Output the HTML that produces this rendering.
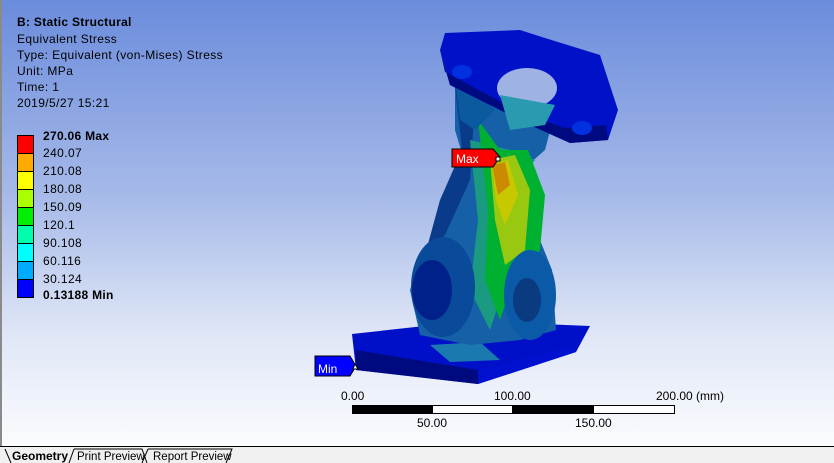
<!DOCTYPE html>
<html><head><meta charset="utf-8"><style>
html,body{margin:0;padding:0}
body{width:834px;height:462px;position:relative;overflow:hidden;font-family:"Liberation Sans","Noto Sans CJK SC",sans-serif;}
.bg{position:absolute;left:0;top:0;width:834px;height:446px;background:linear-gradient(#6b8cdc 0%,#a8bbe9 45%,#dfe6f6 75%,#fbfcfe 100%);}
.lb{position:absolute;left:0;top:0;width:2px;height:446px;background:#8a8a8a}
.t{position:absolute;font-size:12px;color:#000;white-space:nowrap;letter-spacing:0.4px}
.bar{position:absolute;left:17px;top:135px;width:15px;border:1px solid #000}
.bar div{height:17px;border-bottom:1px solid #000}
.bar div:last-child{border-bottom:0}
.tabs{position:absolute;left:0;top:446px;width:834px;height:16px;background:#f0f0f0;border-top:1px solid #000}
</style></head><body>
<div class="bg"></div><div class="lb"></div>
<div class="t" style="left:17px;top:15px;font-weight:bold;letter-spacing:0.3px">B: Static Structural</div>
<div class="t" style="left:17px;top:32px">Equivalent Stress</div>
<div class="t" style="left:17px;top:48px">Type: Equivalent (von-Mises) Stress</div>
<div class="t" style="left:17px;top:64px">Unit: MPa</div>
<div class="t" style="left:17px;top:80px">Time: 1</div>
<div class="t" style="left:17px;top:96px">2019/5/27 15:21</div>
<div class="bar">
<div style="background:#ff0000"></div><div style="background:#ffaa00"></div><div style="background:#ffff00"></div><div style="background:#aaff00"></div><div style="background:#00ee00"></div><div style="background:#00ffaa"></div><div style="background:#00ffff"></div><div style="background:#00aaff"></div><div style="background:#0000ff"></div>
</div>
<div class="t" style="left:43px;top:129px;font-weight:bold;letter-spacing:0.3px">270.06 Max</div>
<div class="t" style="left:43px;top:146px">240.07</div>
<div class="t" style="left:43px;top:164px">210.08</div>
<div class="t" style="left:43px;top:182px">180.08</div>
<div class="t" style="left:43px;top:200px">150.09</div>
<div class="t" style="left:43px;top:218px">120.1</div>
<div class="t" style="left:43px;top:236px">90.108</div>
<div class="t" style="left:43px;top:254px">60.116</div>
<div class="t" style="left:43px;top:272px">30.124</div>
<div class="t" style="left:43px;top:288px;font-weight:bold;letter-spacing:0.3px">0.13188 Min</div>

<svg style="position:absolute;left:0;top:0" width="834" height="446">
<!-- base -->
<polygon points="352,334 470,321 590,326 576,352 478,384 356,370" fill="#0010c8"/>
<polygon points="356,350 478,370 478,384 356,370" fill="#000a80"/>
<polygon points="478,370 576,345 576,352 478,384" fill="#0012d0"/>
<polygon points="430,345 480,342 500,360 450,362" fill="#1a7ab0"/>
<!-- body -->
<polygon points="455,80 520,100 555,112 545,150 528,165 540,240 552,270 556,330 520,340 470,345 420,335 410,290 420,255 440,240 470,180 455,130" fill="#1660a8"/>
<polygon points="455,85 475,100 470,180 445,235 425,255 440,200 462,150" fill="#0a3a8a"/>
<polygon points="470,140 510,150 535,160 520,180 530,250 500,300 490,330 470,290 478,220" fill="#1a9a80"/>
<polygon points="478,120 500,150 528,150 545,195 540,250 510,290 500,320 485,280 488,210" fill="#00b030"/>
<polygon points="490,160 515,155 530,190 525,250 505,265 495,220" fill="#99c810"/>
<polygon points="492,165 508,160 518,195 505,225 496,200" fill="#c8c800"/>
<polygon points="492,165 505,162 510,185 498,195" fill="#cc8a00"/>
<ellipse cx="443" cy="287" rx="32" ry="50" fill="#0a4a9a"/>
<ellipse cx="432" cy="290" rx="20" ry="30" fill="#00208a"/>
<ellipse cx="530" cy="295" rx="26" ry="45" fill="#0a5aa8"/>
<ellipse cx="527" cy="300" rx="14" ry="22" fill="#0a3a80"/>
<polygon points="455,80 480,95 495,110 475,130 460,120" fill="#0b5aa0"/>
<!-- top plate -->
<polygon points="445,33 520,30 545,38 600,55 618,110 608,140 570,143 530,125 480,100 450,85 440,50" fill="#0012c8"/>
<polygon points="440,50 450,85 480,100 530,125 570,143 608,140 606,125 565,128 520,112 475,88 445,72" fill="#000a80"/>
<ellipse cx="527" cy="88" rx="30" ry="20" fill="#9fb2e4"/>
<polygon points="500,95 555,105 545,125 510,130" fill="#2a9ab0"/>
<ellipse cx="462" cy="72" rx="10" ry="7" fill="#0030e0"/>
<ellipse cx="582" cy="128" rx="10" ry="7" fill="#0030e0"/>
<!-- labels -->
<polygon points="452,149 493,149 500,157 493,167 452,167" fill="#ff0000" stroke="#000"/>
<text x="456" y="163" font-size="12" fill="#fff" font-family="Liberation Sans">Max</text>
<rect x="496" y="157" width="4" height="4" fill="#fff" stroke="#000"/>
<polygon points="315,356 350,356 356,366 350,376 315,376" fill="#0000ff" stroke="#000"/>
<text x="318" y="373" font-size="12" fill="#fff" font-family="Liberation Sans">Min</text>
<polygon points="353,369 358,369 355,364" fill="#fff" stroke="#000"/>
<!-- scale -->
<rect x="352.5" y="405.5" width="322" height="8" fill="#fff" stroke="#000"/>
<rect x="352" y="405" width="81" height="9" fill="#000"/>
<rect x="512" y="405" width="82" height="9" fill="#000"/>
<g font-size="12" font-family="Liberation Sans" fill="#000">
<text x="341" y="400">0.00</text><text x="494" y="400">100.00</text><text x="656" y="400">200.00 (mm)</text>
<text x="417" y="427">50.00</text><text x="575" y="427">150.00</text>
</g>
</svg>
<div class="tabs">
<svg width="300" height="16" style="position:absolute;left:0;top:0">
<path d="M5,2 L11,16 M69,16 L74,2 M74,2 L142,2 L147,16 M142,16 L148,2 M148,2 L232,2 L226,16" stroke="#000" fill="none"/>
<text x="12" y="13" font-size="12" font-weight="bold" font-family="Liberation Sans">Geometry</text>
<text x="77" y="13" font-size="11.5" font-family="Liberation Sans">Print Preview</text>
<text x="153" y="13" font-size="11.5" font-family="Liberation Sans">Report Preview</text>
</svg>
</div>
</body></html>
